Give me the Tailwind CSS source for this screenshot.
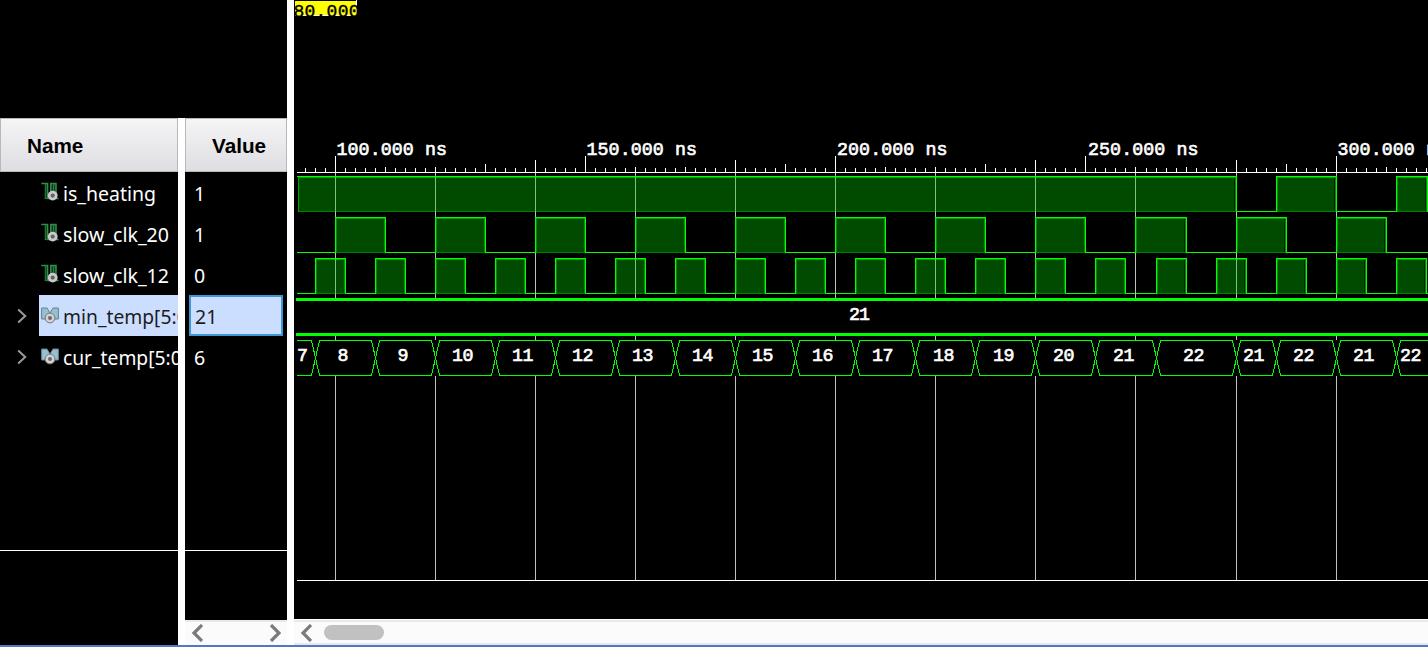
<!DOCTYPE html>
<html lang="en">
<head>
<meta charset="utf-8">
<title>Waveform viewer</title>
<script src="https://cdn.jsdelivr.net/npm/@tailwindcss/browser@4"></script>
</head>
<body class="bg-white">
<svg class="hidden">
  <defs>
    <symbol id="sig" viewBox="0 0 18 19">
      <path d="M4.5 1.5H7V17H4.5zM9.5 1.5H15.2V17H9.5z" fill="#123a1c"/>
      <path d="M.3 1.6H6.6V16.5H9.8V1.6H15V16.5H17.6" fill="none" stroke="#2f9148" stroke-width="1.5"/>
      <path d="M4.3 1.6V16.5H7M12.6 1.6V10" fill="none" stroke="#2a7f40" stroke-width="1.1"/>
      <circle cx="11.7" cy="13.6" r="4.9" fill="#cacaca"/>
      <circle cx="11.7" cy="13.6" r="2.1" fill="#626262"/>
    </symbol>
    <symbol id="bus" viewBox="0 0 18 17">
      <path d="M.6 1H6L9 6L12 1H17.4V12H.6z" fill="#94c0d6" stroke="#6b7f8a" stroke-width="1"/>
      <path d="M6.6 0H11.4L9 4.5z" fill="currentColor"/>
      <circle cx="9" cy="11" r="4.9" fill="#d2d2d2" stroke="#777" stroke-width="1"/>
      <circle cx="9" cy="11" r="2" fill="#6a6a6a"/>
    </symbol>
    <symbol id="chev" viewBox="0 0 10 16">
      <path d="M1.2 1.5L8.2 8L1.2 14.5" fill="none" stroke="#9a9a9a" stroke-width="2"/>
    </symbol>
  </defs>
</svg>
<div class="relative flex h-[645px] w-[1428px] overflow-hidden bg-white font-['Noto_Sans',sans-serif] text-[20px] text-white">
  <div class="flex h-full w-[287px] shrink-0 flex-col">
    <div class="h-[118px] bg-black"></div>
    <div class="flex h-[527px] gap-[7px]">
      <section class="flex w-[178px] flex-col overflow-hidden bg-black">
        <div class="flex h-[54px] shrink-0 items-center border border-[#b8b8b8] bg-linear-to-b from-[#f5f5f5] to-[#dedde2] pt-[2px] pl-[26px] font-['Liberation_Sans',Arial,sans-serif] text-[20.7px] font-bold text-black">Name</div>
        <div class="flex h-[41px] shrink-0 items-center gap-[4px] pl-[41px]"><svg class="mb-[2px] h-[19px] w-[18px] shrink-0"><use href="#sig"/></svg><svg class="h-[41px] w-[115px] shrink-0 fill-current"><text x="0" y="29" textLength="93" lengthAdjust="spacingAndGlyphs">is_heating</text></svg></div>
        <div class="flex h-[41px] shrink-0 items-center gap-[4px] pl-[41px]"><svg class="mb-[2px] h-[19px] w-[18px] shrink-0"><use href="#sig"/></svg><svg class="h-[41px] w-[115px] shrink-0 fill-current"><text x="0" y="29" textLength="106" lengthAdjust="spacingAndGlyphs">slow_clk_20</text></svg></div>
        <div class="flex h-[41px] shrink-0 items-center gap-[4px] pl-[41px]"><svg class="mb-[2px] h-[19px] w-[18px] shrink-0"><use href="#sig"/></svg><svg class="h-[41px] w-[115px] shrink-0 fill-current"><text x="0" y="29" textLength="106" lengthAdjust="spacingAndGlyphs">slow_clk_12</text></svg></div>
        <div class="flex h-[41px] shrink-0 items-center pl-[17px]"><svg class="h-4 w-[10px] shrink-0"><use href="#chev"/></svg><div class="ml-[12px] flex h-[41px] w-[139px] shrink-0 items-center gap-[4px] overflow-hidden bg-[#ccdeff] pl-[2px] text-[#1c1c1c]"><svg class="mb-[1px] h-[17px] w-[18px] shrink-0 text-[#ccdeff]"><use href="#bus"/></svg><svg class="h-[41px] w-[135px] shrink-0 fill-current"><text x="0" y="29" textLength="131" lengthAdjust="spacingAndGlyphs">min_temp[5:0]</text></svg></div></div>
        <div class="flex h-[41px] shrink-0 items-center pl-[17px]"><svg class="h-4 w-[10px] shrink-0"><use href="#chev"/></svg><div class="ml-[12px] flex h-[41px] w-[139px] shrink-0 items-center gap-[4px] overflow-hidden pl-[2px]"><svg class="mb-[1px] h-[17px] w-[18px] shrink-0 text-black"><use href="#bus"/></svg><svg class="h-[41px] w-[135px] shrink-0 fill-current"><text x="0" y="29" textLength="125" lengthAdjust="spacingAndGlyphs">cur_temp[5:0]</text></svg></div></div>
        <div class="mt-[173px] h-px shrink-0 bg-white"></div>
      </section>
      <section class="flex w-[102px] flex-col bg-black">
        <div class="flex h-[54px] shrink-0 items-center border border-[#b8b8b8] bg-linear-to-b from-[#f5f5f5] to-[#dedde2] pt-[2px] pl-[26px] font-['Liberation_Sans',Arial,sans-serif] text-[20.7px] font-bold text-black">Value</div>
        <div class="flex h-[41px] shrink-0 items-center pt-[3px] pl-[9px] text-[19.5px]">1</div>
        <div class="flex h-[41px] shrink-0 items-center pt-[3px] pl-[9px] text-[19.5px]">1</div>
        <div class="flex h-[41px] shrink-0 items-center pt-[3px] pl-[9px] text-[19.5px]">0</div>
        <div class="ml-[4px] flex h-[41px] w-[94px] shrink-0 items-center border-2 border-[#3e96d2] bg-[#ccdeff] pt-[3px] pl-[4px] text-[19.5px] text-[#1c1c1c]">21</div>
        <div class="flex h-[41px] shrink-0 items-center pt-[3px] pl-[9px] text-[19.5px]">6</div>
        <div class="mt-[173px] h-px shrink-0 bg-white"></div>
        <div class="mt-auto flex h-[25px] items-center justify-between border-t-2 border-[#e8e8e8] bg-[#fbfbfb] px-[6px] pb-[2px]">
          <svg class="h-[18px] w-3" viewBox="0 0 12 18"><path d="M11 1L3 9L11 17" fill="none" stroke="#7b7b7b" stroke-width="3.2"/></svg>
          <svg class="h-[18px] w-3" viewBox="0 0 12 18"><path d="M2 1L10 9L2 17" fill="none" stroke="#7b7b7b" stroke-width="3.2"/></svg>
        </div>
      </section>
    </div>
  </div>
  <div class="ml-[7px] flex h-full w-[1134px] flex-col">
    <svg id="wave" class="block h-[619px] w-[1134px] shrink-0 bg-black" viewBox="294 0 1134 619" shape-rendering="crispEdges"></svg>
    <div class="mt-px flex h-[25px] items-center border-y-2 border-[#e8e8e8] bg-[#fbfbfb] pl-[6px]">
      <svg class="h-[18px] w-3" viewBox="0 0 12 18"><path d="M11 1L3 9L11 17" fill="none" stroke="#7b7b7b" stroke-width="3.2"/></svg>
      <div class="mb-px ml-[12px] h-[15px] w-[60px] rounded-full bg-[#c1c1c1]"></div>
    </div>
  </div>
</div>
<div class="h-[2px] w-[1428px] bg-[#4a7cc4]"></div>
<script>
// Time (ns) to pixel column
const X = t => Math.floor(335.03 + (t - 100) * 5.006);
let o = '';
const R = (x, y, w, h, f) => { o += `<rect x="${x}" y="${y}" width="${w}" height="${h}" fill="${f}"/>`; };
const T = (x, y, s, w) => { o += `<text x="${x}" y="${y}" fill="#fff" stroke="#fff" stroke-width=".65" font-family="'Liberation Mono',monospace" font-size="18.3px" textLength="${w}">${s}</text>`; };

// One high pulse of a binary signal
function pulse(top, a, b) {
  const w = b - a;
  R(a, top, w + 1, 36, '#004b00');
  R(a + 1, top + 35, w - 1, 1, '#008000');
  R(a + 1, top + 1, 1, 34, '#008f00');
  if (b > 1180) R(b - 2, top + 2, 1, 33, '#001c00');
  R(b - 1, top + 1, 1, 34, '#008f00');
  R(a + 1, top + 1, w - 1, 1, '#00a000');
  R(a, top, w + 1, 1, '#00ff00');
  R(a, top, 1, 36, '#00ff00');
  R(b, top, 1, 36, '#00ff00');
}
function binary(top, highs) {
  R(297, top + 35, 1131, 1, '#00ff00');
  for (const [a, b] of highs) pulse(top, a, b);
}

// is_heating, already high at the left edge
binary(176, [[298, 1236], [1276, 1336], [1396, 1427]]);
R(297, 177, 1, 35, '#000');
R(298, 177, 1, 35, '#00a000');
R(299, 178, 1, 33, '#004b00');
R(297, 176, 2, 1, '#00ff00');

const clk20 = [], clk12 = [];
for (let t = 100; t <= 300; t += 20) clk20.push([X(t), X(t + 10)]);
for (let t = 96; t <= 312; t += 12) clk12.push([X(t), X(t + 6)]);
binary(217, clk20);
binary(258, clk12);

// Vertical grid, beneath the buses
for (let t = 100; t <= 300; t += 20) {
  const x = X(t);
  R(x, 173, 1, 3, '#c0c0c0');
  if (t < 280) R(x, 177, 1, 35, '#7cc47c');
  R(x, 212, 1, 5, '#c0c0c0');
  R(x, 253, 1, 5, '#c0c0c0');
  if (clk12.some(([a, b]) => a < x && b > x)) R(x, 259, 1, 35, '#7cc47c');
  else if (!clk12.some(([a]) => a === x)) R(x, 258, 1, 36, '#c0c0c0');
  R(x, 294, 1, 4, '#c0c0c0');
  R(x, 336, 1, 245, '#c0c0c0');
}

// Ruler
R(297, 172, 1131, 1, '#fff');
for (let t = 94; t <= 318; t += 2) {
  const m = t % 100;
  const y = t % 50 === 0 ? 156 : m === 40 || m === 80 ? 160 : m === 30 || m === 90 ? 164 : t % 10 === 0 ? 167 : 168;
  R(Math.max(305, X(t)), y, 1, 172 - y, '#fff');
}
[[336.5, 100], [586.5, 150], [837, 200], [1088, 250], [1337.5, 300]].forEach(([x, t]) => T(x, 155, t + '.000 ns', 110.5));

// min_temp bus
R(296, 298, 1132, 3, '#00ff00');
R(296, 301, 1132, 32, '#000');
R(296, 333, 1132, 3, '#00ff00');
T(849, 320, '21', 21);

// cur_temp bus
R(297, 340, 1131, 36, '#000');
const edges = [315, 375, 435, 495, 555, 615, 675, 735, 795, 855, 915, 975, 1035, 1095, 1156, 1236, 1276, 1336, 1396];
let d = '', px = 297;
for (const e of edges) {
  const s = px === 297 ? 297 : px + 4;
  d += `M${s} 340.5H${e - 3}M${s} 375.5H${e - 3}M${e - 3.5} 340.5L${e + .5} 358L${e + 4.5} 375.5M${e + 4.5} 340.5L${e + .5} 358L${e - 3.5} 375.5`;
  px = e;
}
d += 'M1400 340.5H1428M1400 375.5H1428';
o += `<path d="${d}" fill="none" stroke="#00ff00" stroke-width="1"/>`;
[[297, '7'], [337.5, '8'], [397.5, '9'], [452, '10'], [512, '11'], [572, '12'], [632, '13'], [692, '14'], [752, '15'], [812, '16'], [872, '17'], [933, '18'], [993, '19'], [1053, '20'], [1113, '21'], [1183, '22'], [1243, '21'], [1293, '22'], [1353, '21'], [1400, '22']]
  .forEach(([x, s]) => T(x, 361, s, s.length > 1 ? 21.5 : 11));

// Lower boundary
R(297, 580, 1131, 1, '#fff');

// Cursor label
R(295, 1, 61, 14, '#ffff00');
R(356, 0, 1, 15, '#fff');
R(295, 15, 61, 1, '#fff');
o += `<clipPath id="cl"><rect x="294" y="0" width="63" height="16"/></clipPath><text clip-path="url(#cl)" x="293.5" y="17" fill="#000" stroke="#000" stroke-width=".4" font-family="'Liberation Mono',monospace" font-size="18px" textLength="66">80.000</text>`;
document.getElementById('wave').innerHTML = o;
</script>
</body>
</html>
